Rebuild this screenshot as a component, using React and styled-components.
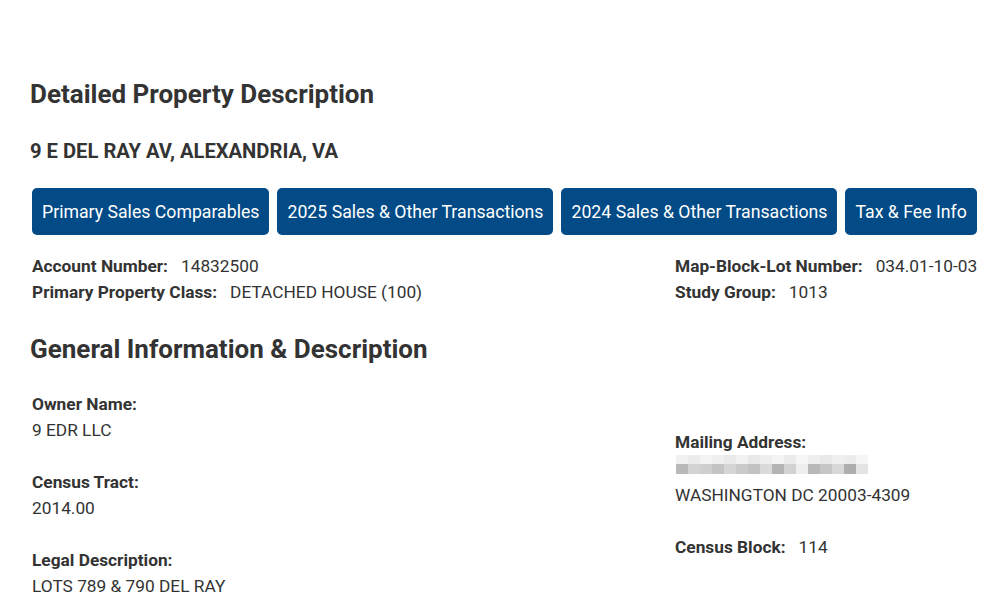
import React from 'react';
import styled, { createGlobalStyle } from 'styled-components';

const GlobalStyle = createGlobalStyle`
  body {
    margin: 0;
    background: #fff;
    font-family: Roboto, "Liberation Sans", Arial, sans-serif;
    color: #333;
  }
`;

const Page = styled.div`
  padding: 79px 21px 0 30px;
`;

const Title = styled.h1`
  margin: 0;
  font-size: 26px;
  line-height: 31px;
  font-weight: 700;
  color: #333;
`;

const Address = styled.h2`
  margin: 29px 0 0;
  font-size: 20.2px;
  line-height: 24px;
  font-weight: 700;
  color: #333;
`;

const Tabs = styled.div`
  display: flex;
  gap: 8px;
  margin: 25px 0 0 2px;
`;

const TabButton = styled.button`
  background: #024b87;
  color: #fff;
  border: none;
  border-radius: 5px;
  font-family: inherit;
  font-size: 17.7px;
  line-height: 27px;
  padding: 11px 10px 9px;
  cursor: pointer;
  white-space: nowrap;
`;

const Columns = styled.div`
  display: grid;
  grid-template-columns: 1fr 304px;
  margin: ${p => p.$top || 0}px 0 0 2px;
`;

const Col = styled.div`
  padding-top: ${p => p.$pad || 0}px;
`;

const Line = styled.div`
  font-size: 17.3px;
  line-height: 26px;
  white-space: nowrap;
`;

const Label = styled.span`
  font-weight: 700;
  margin-right: ${p => (p.$inline ? '13px' : '0')};
`;

const Value = styled.span`
  font-weight: 400;
`;

const Block = styled.div`
  margin-bottom: 26px;
  font-size: 17.3px;
  line-height: 26px;
`;

const Section = styled.h2`
  margin: 29px 0 0;
  font-size: 26px;
  line-height: 31px;
  font-weight: 700;
  color: #333;
`;

const Blur = styled.div`
  display: grid;
  grid-template-columns: repeat(16, 12px);
  grid-template-rows: 9px 10px;
  width: 194px;
  margin: 0 0 8px 1px;
`;

const Pix = styled.div`
  background: ${p => p.$c};
`;

const topRow = ['#f1f1f1', '#ececec', '#f3f3f3', '#efefef', '#eaeaea', '#f2f2f2', '#e8e8e8', '#eeeeee', '#f4f4f4', '#ebebeb', '#f6f6f6', '#eeeeee', '#e9e9e9', '#f0f0f0', '#ececec', '#f5f5f5'];
const botRow = ['#b9b9b9', '#d3d3d3', '#cfcfcf', '#c4c4c4', '#d6d6d6', '#cacaca', '#c2c2c2', '#dadada', '#b4b4b4', '#d2d2d2', '#eeeeee', '#b8b8b8', '#c6c6c6', '#d8d8d8', '#aeaeae', '#e4e4e4'];

export default function App() {
  return (
    <Page>
      <GlobalStyle />
      <Title>Detailed Property Description</Title>
      <Address>9 E DEL RAY AV, ALEXANDRIA, VA</Address>
      <Tabs>
        <TabButton>Primary Sales Comparables</TabButton>
        <TabButton>2025 Sales &amp; Other Transactions</TabButton>
        <TabButton>2024 Sales &amp; Other Transactions</TabButton>
        <TabButton>Tax &amp; Fee Info</TabButton>
      </Tabs>

      <Columns $top={18}>
        <Col>
          <Line><Label $inline>Account Number:</Label><Value>14832500</Value></Line>
          <Line><Label $inline>Primary Property Class:</Label><Value>DETACHED HOUSE (100)</Value></Line>
        </Col>
        <Col>
          <Line><Label $inline>Map-Block-Lot Number:</Label><Value>034.01-10-03</Value></Line>
          <Line><Label $inline>Study Group:</Label><Value>1013</Value></Line>
        </Col>
      </Columns>

      <Section>General Information &amp; Description</Section>

      <Columns $top={26}>
        <Col>
          <Block>
            <Label>Owner Name:</Label>
            <div>9 EDR LLC</div>
          </Block>
          <Block>
            <Label>Census Tract:</Label>
            <div>2014.00</div>
          </Block>
          <Block>
            <Label>Legal Description:</Label>
            <div>LOTS 789 &amp; 790 DEL RAY</div>
          </Block>
        </Col>
        <Col $pad={38}>
          <Block>
            <div><Label>Mailing Address:</Label></div>
            <Blur>
              {topRow.map((c, i) => <Pix key={'t' + i} $c={c} />)}
              {botRow.map((c, i) => <Pix key={'b' + i} $c={c} />)}
            </Blur>
            <div>WASHINGTON DC 20003-4309</div>
          </Block>
          <Line><Label $inline>Census Block:</Label><Value>114</Value></Line>
        </Col>
      </Columns>
    </Page>
  );
}
